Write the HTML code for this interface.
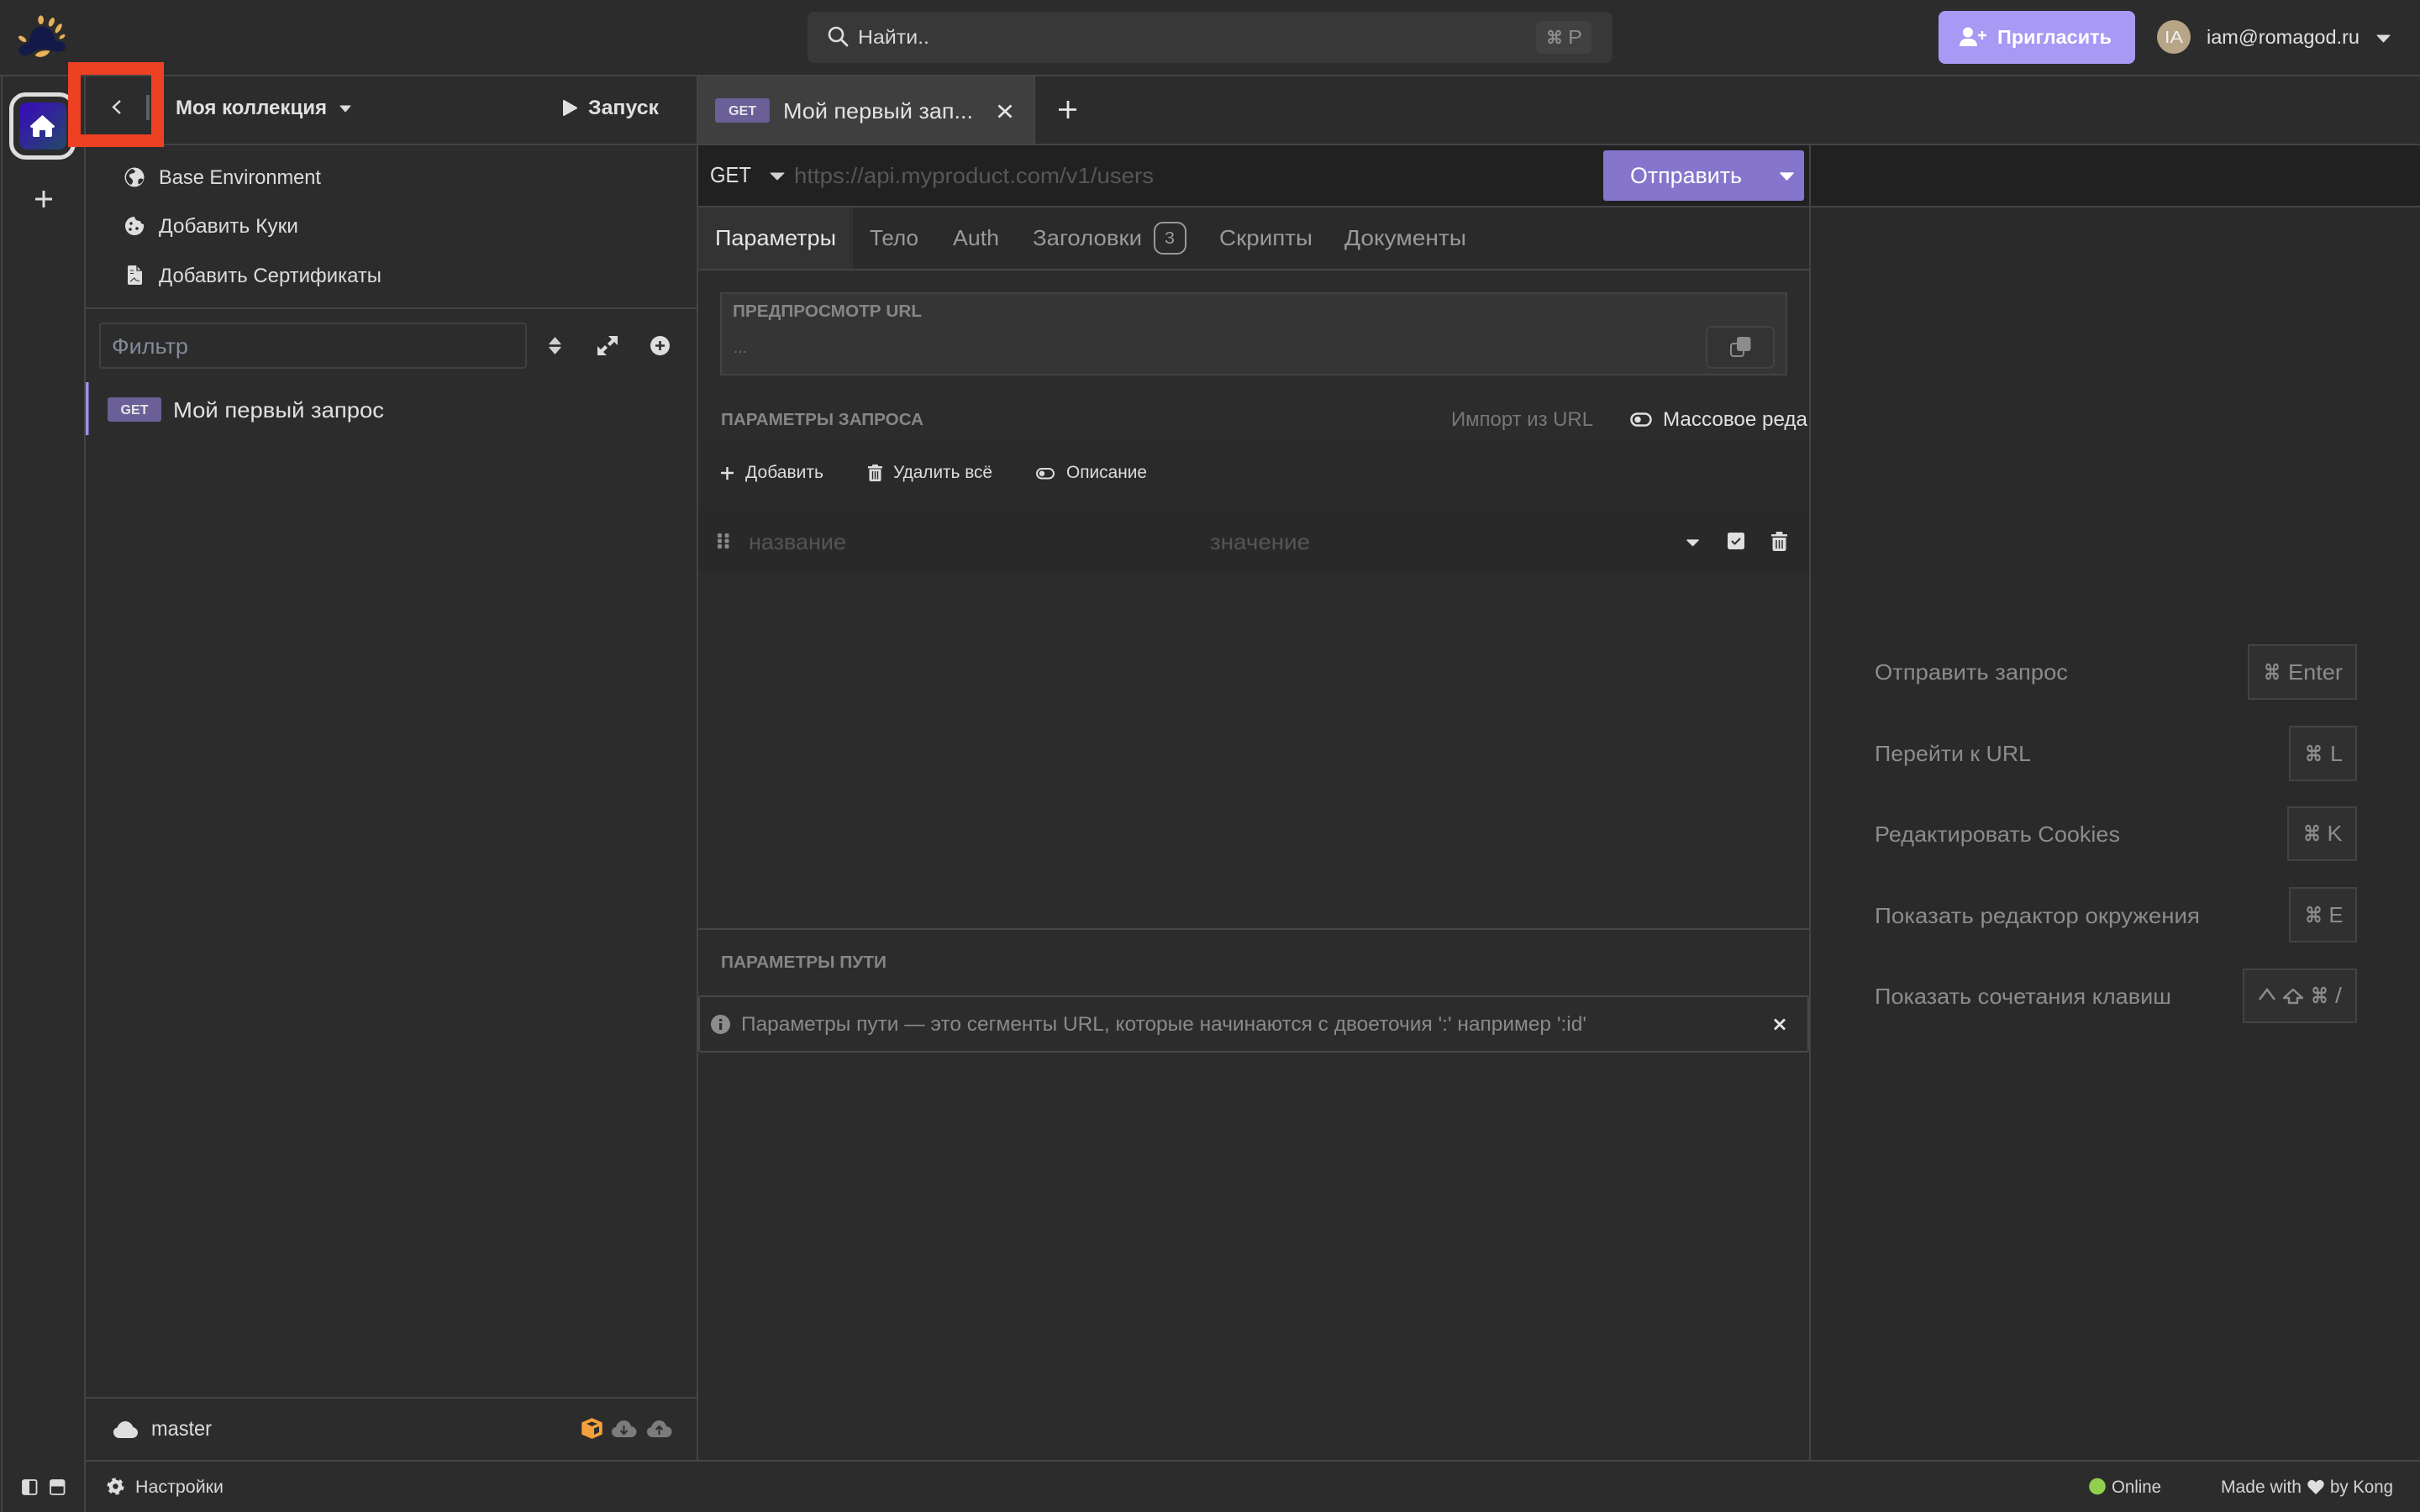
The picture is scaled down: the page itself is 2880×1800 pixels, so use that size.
<!DOCTYPE html>
<html lang="ru">
<head>
<meta charset="utf-8">
<title>Insomnia</title>
<style>
html,body{margin:0;padding:0;background:#2c2c2c;width:2880px;height:1800px;overflow:hidden}
svg{display:block}
text{font-family:"Liberation Sans","DejaVu Sans",sans-serif;white-space:pre}
.d{font-family:"DejaVu Sans","Liberation Sans",sans-serif;stroke:#8c8c8c;stroke-width:.6}
.l{fill:#444}
</style>
</head>
<body>
<svg xmlns="http://www.w3.org/2000/svg" width="2880" height="1800" viewBox="0 0 2880 1800">
<rect width="2880" height="1800" fill="#2c2c2c"/>

<!-- backgrounds -->
<rect x="831" y="173" width="2049" height="72" fill="#212121"/>
<rect x="831" y="247" width="1322" height="73" fill="#2a2a2a"/>
<rect x="2155" y="247" width="725" height="1491" fill="#2a2a2a"/>
<rect x="831" y="525" width="1322" height="82" fill="#2a2a2a"/>
<rect x="831" y="607" width="1322" height="75" fill="#292929"/>
<rect x="831" y="91" width="399" height="80" fill="#3f3f3f"/>
<rect x="831" y="247" width="184" height="73" fill="#333333"/>

<!-- structure lines -->
<rect class="l" x="0" y="89" width="2880" height="2"/>
<rect class="l" x="1" y="89" width="2" height="1711"/>
<rect class="l" x="100" y="89" width="2" height="1711"/>
<rect class="l" x="829" y="89" width="2" height="1650"/>
<rect class="l" x="102" y="171" width="727" height="2"/>
<rect class="l" x="102" y="366" width="727" height="2"/>
<rect class="l" x="102" y="1663" width="727" height="2"/>
<rect class="l" x="102" y="1738" width="2778" height="2"/>
<rect class="l" x="831" y="171" width="2049" height="2"/>
<rect class="l" x="1230" y="91" width="2" height="81"/>
<rect class="l" x="831" y="245" width="2049" height="2"/>
<rect class="l" x="831" y="320" width="1322" height="2"/>
<rect class="l" x="2153" y="172" width="2" height="1566"/>
<rect class="l" x="831" y="1105" width="1322" height="2"/>

<!-- logo -->
<g transform="scale(0.33333)">
<path d="M105 150C105 115 125 95 150 95C178 95 195 120 197 147C210 143 234 148 234 168C234 185 210 187 195 183C170 175 145 172 125 182C110 192 95 202 82 198C70 195 62 180 70 170C78 160 95 157 105 150Z" fill="#131a48"/>
<g fill="#e8b15a">
<ellipse cx="146" cy="71" rx="10" ry="16"/>
<ellipse cx="184" cy="79" rx="9" ry="17" transform="rotate(25 184 79)"/>
<ellipse cx="209" cy="101" rx="8" ry="19" transform="rotate(32 209 101)"/>
<ellipse cx="222" cy="131" rx="6" ry="12" transform="rotate(55 222 131)"/>
<ellipse cx="80" cy="139" rx="8" ry="16" transform="rotate(-55 80 139)"/>
<path d="M125 198C135 182 160 178 178 182C172 198 145 212 125 198Z"/>
</g>
</g>

<!-- top search -->
<rect x="961" y="14" width="958" height="61" rx="8" fill="#383838"/>
<circle cx="995" cy="41" r="8" fill="none" stroke="#dcdcdc" stroke-width="2.6"/>
<path d="M1001 47L1008 54" stroke="#dcdcdc" stroke-width="2.8" stroke-linecap="round"/>
<text x="1021" y="52" font-size="23" fill="#d8d8d8" textLength="85" lengthAdjust="spacingAndGlyphs">Найти..</text>
<rect x="1828" y="25" width="66" height="39" rx="6" fill="#414141"/>
<text class="d" x="1840" y="52" font-size="21" fill="#8c8c8c" textLength="20" lengthAdjust="spacingAndGlyphs">⌘</text>
<text x="1866" y="52" font-size="23" fill="#8c8c8c" textLength="17" lengthAdjust="spacingAndGlyphs">P</text>

<!-- invite -->
<rect x="2307" y="13" width="234" height="63" rx="8" fill="#a899f5"/>
<circle cx="2342" cy="38.5" r="6" fill="#fff"/>
<path d="M2332 55C2332 49 2336 46 2340 46H2344C2349 46 2353 49 2353 55Z" fill="#fff"/>
<path d="M2354 42H2364M2359 37V47" stroke="#fff" stroke-width="2.4"/>
<text x="2377" y="52" font-size="23" font-weight="700" fill="#fff" textLength="136" lengthAdjust="spacingAndGlyphs">Пригласить</text>

<!-- user -->
<circle cx="2587" cy="44" r="20" fill="#b8a486"/>
<text x="2576" y="51" font-size="20" fill="#f0f0f0" textLength="22" lengthAdjust="spacingAndGlyphs">IA</text>
<text x="2626" y="52" font-size="23" fill="#e0e0e0" textLength="182" lengthAdjust="spacingAndGlyphs">iam@romagod.ru</text>
<path d="M2829 42H2844L2836.5 50Z" fill="#dcdcdc" stroke="#dcdcdc" stroke-width="1" stroke-linejoin="round"/>

<!-- left rail -->
<rect x="13.5" y="112.5" width="74" height="75" rx="17" fill="none" stroke="#dedede" stroke-width="5"/>
<defs>
<linearGradient id="hg" x1="0" y1="0" x2="1" y2="1">
<stop offset="0" stop-color="#3a08bd"/>
<stop offset="1" stop-color="#244a69"/>
</linearGradient>
</defs>
<rect x="23" y="122" width="56" height="56" rx="9" fill="url(#hg)"/>
<path d="M50.5 137L65 150Q65 152 63 152H62V161Q62 163 60 163H54V156Q54 155 53 155H48Q47 155 47 156V163H41Q39 163 39 161V152H38Q36 152 36 150Z" fill="#fff"/>
<path d="M52 227V247M42 237H62" stroke="#dcdcdc" stroke-width="3"/>

<!-- sidebar header -->
<path d="M143 120L135 127.5L143 135" fill="none" stroke="#dcdcdc" stroke-width="2.4"/>
<rect x="174" y="113" width="4" height="30" fill="#5f5f5f"/>
<text x="209" y="136" font-size="24" font-weight="700" fill="#e0e0e0" textLength="180" lengthAdjust="spacingAndGlyphs">Моя коллекция</text>
<path d="M405 126H417L411 133Z" fill="#dcdcdc" stroke="#dcdcdc" stroke-width="1" stroke-linejoin="round"/>
<path d="M671 120V137L686 128.5Z" fill="#e0e0e0" stroke="#e0e0e0" stroke-width="2" stroke-linejoin="round"/>
<text x="700" y="136" font-size="24" font-weight="700" fill="#e0e0e0" textLength="84" lengthAdjust="spacingAndGlyphs">Запуск</text>

<!-- sidebar menu -->
<circle cx="160" cy="211" r="11.5" fill="#dedede"/>
<path d="M157 201C160 202 162 204 160 205.500C158 207 155 206 154 208.500C153 211 157 212 158 215C158.500 217 157 219 155.500 220C152 218 150 215 150 211C150 207 153 203 157 201Z" fill="#2c2c2c"/>
<path d="M165.500 213C168 212 169.500 212.500 170.500 213.500C170 216 168 218.500 165 219.500C164 218 164 215 165.500 213Z" fill="#2c2c2c"/>
<text x="189" y="219" font-size="24" fill="#dcdcdc" textLength="193" lengthAdjust="spacingAndGlyphs">Base Environment</text>

<path d="M160 258C161 262 163 263 167 263C167 266 170 267 171 267C172 274 167 280 160 280C154 280 149 275 149 269C149 263 154 258 160 258Z" fill="#dedede"/>
<circle cx="156" cy="266" r="1.800" fill="#2c2c2c"/><circle cx="155" cy="273" r="1.800" fill="#2c2c2c"/><circle cx="163" cy="272" r="1.800" fill="#2c2c2c"/>
<text x="189" y="277" font-size="24" fill="#dcdcdc" textLength="166" lengthAdjust="spacingAndGlyphs">Добавить Куки</text>

<path d="M154 316H162L169 323V337Q169 339 167 339H154Q152 339 152 337V318Q152 316 154 316Z" fill="#dedede"/>
<path d="M163 316V322H169" fill="none" stroke="#2c2c2c" stroke-width="1.300"/>
<path d="M155 322H159M155 325.500H159" stroke="#2c2c2c" stroke-width="1.100"/>
<path d="M155 335C158 334 158 331 160 331C161 333 161 334 166 334.500" fill="none" stroke="#2c2c2c" stroke-width="1.100"/>
<text x="189" y="336" font-size="24" fill="#dcdcdc" textLength="265" lengthAdjust="spacingAndGlyphs">Добавить Сертификаты</text>

<!-- filter -->
<rect x="119" y="385" width="507" height="53" rx="3" fill="none" stroke="#404040" stroke-width="2"/>
<text x="133" y="421" font-size="26" fill="#858a99" textLength="91" lengthAdjust="spacingAndGlyphs">Фильтр</text>
<path d="M660.5 402L667 409.5H654Z M660.5 421L654 413.5H667Z" fill="#d0d0d0" stroke="#d0d0d0" stroke-width="1.2" stroke-linejoin="round"/>
<g fill="#dcdcdc" stroke="none">
<path d="M724 400H735V411L731 407L726 412L723 409L728 404Z"/>
<path d="M722 423H711V412L715 416L720 411L723 414L718 419Z"/>
</g>
<circle cx="785.5" cy="411.5" r="11.5" fill="#dedede"/>
<path d="M785.5 406V417M780 411.5H791" stroke="#2c2c2c" stroke-width="2.6"/>

<!-- request row -->
<rect x="102" y="455" width="3.5" height="63" fill="#a08ff0"/>
<rect x="128" y="473" width="64" height="29" rx="3" fill="#6a5f96"/>
<text x="143.500" y="493" font-size="16" font-weight="700" fill="#e6e6e6" textLength="33" lengthAdjust="spacingAndGlyphs">GET</text>
<text x="206" y="497" font-size="26" fill="#e2e2e2" textLength="251" lengthAdjust="spacingAndGlyphs">Мой первый запрос</text>

<!-- sidebar footer -->
<path d="M142 1712C138 1712 135 1709 135 1705C135 1702 137 1700 139.500 1699.500C141 1695 145 1692 149 1692C153.500 1692 157 1695 158.500 1699C161.500 1700 164 1702 164 1705.500C164 1709 161 1712 157 1712Z" fill="#dedede"/>
<text x="180" y="1709" font-size="25" fill="#dcdcdc" textLength="72" lengthAdjust="spacingAndGlyphs">master</text>

<path d="M704.500 1689L716 1694V1707L704.500 1712L693 1707V1694Z" fill="#f4a03c" stroke="#f4a03c" stroke-width="1.500" stroke-linejoin="round"/>
<path d="M704.500 1692.500L711 1695L704.500 1698L698 1695Z" fill="#2c2c2c"/>
<path d="M707 1700.500L713 1698V1705L707 1708Z" fill="#2c2c2c"/>

<g fill="#7c7c7c"><path d="M735 1711C731 1711 728 1708 728 1704.500C728 1701.500 730 1699.500 733 1699C734 1694.500 738 1691 742.500 1691C747 1691 750 1694 751 1698C755 1698.500 757.500 1701 757.500 1704.500C757.500 1708 754.500 1711 751 1711Z"/>
<path d="M777 1711C773 1711 770 1708 770 1704.500C770 1701.500 772 1699.500 775 1699C776 1694.500 780 1691 784.500 1691C789 1691 792 1694 793 1698C797 1698.500 799.500 1701 799.500 1704.500C799.500 1708 796.500 1711 793 1711Z"/></g>
<path d="M742.500 1697V1707M738.500 1703L742.500 1707L746.500 1703" fill="none" stroke="#2c2c2c" stroke-width="2"/>
<path d="M784.500 1708V1698M780.500 1702L784.500 1698L788.500 1702" fill="none" stroke="#2c2c2c" stroke-width="2"/>

<!-- tab bar -->
<rect x="851" y="117" width="65" height="29" rx="3" fill="#6a5f96"/>
<text x="867" y="137" font-size="16" font-weight="700" fill="#e6e6e6" textLength="33" lengthAdjust="spacingAndGlyphs">GET</text>
<text x="932" y="141" font-size="26" fill="#e2e2e2" textLength="226" lengthAdjust="spacingAndGlyphs">Мой первый зап...</text>
<path d="M1188.500 125.500L1203.500 139.500M1203.500 125.500L1188.500 139.500" stroke="#e6e6e6" stroke-width="2.700"/>
<path d="M1271 120V141M1260 130.500H1281" stroke="#e6e6e6" stroke-width="2.800"/>

<!-- url bar -->
<text x="845" y="217" font-size="26" fill="#e0e0e0" textLength="49" lengthAdjust="spacingAndGlyphs">GET</text>
<path d="M917 206H933L925 214Z" fill="#d0d0d0" stroke="#d0d0d0" stroke-width="1" stroke-linejoin="round"/>
<text x="945" y="218" font-size="26" fill="#575757" textLength="428" lengthAdjust="spacingAndGlyphs">https://api.myproduct.com/v1/users</text>
<rect x="1908" y="179" width="239" height="60" rx="3" fill="#8675cd"/>
<text x="1940" y="218" font-size="27" fill="#fff" textLength="133" lengthAdjust="spacingAndGlyphs">Отправить</text>
<path d="M2119 206H2134L2126.500 214Z" fill="#fff" stroke="#fff" stroke-width="1.500" stroke-linejoin="round"/>

<!-- request tabs -->
<text x="851" y="292" font-size="26" fill="#e6e6e6" textLength="144" lengthAdjust="spacingAndGlyphs">Параметры</text>
<text x="1035" y="292" font-size="26" fill="#9a9a9a" textLength="58" lengthAdjust="spacingAndGlyphs">Тело</text>
<text x="1134" y="292" font-size="26" fill="#9a9a9a" textLength="55" lengthAdjust="spacingAndGlyphs">Auth</text>
<text x="1229" y="292" font-size="26" fill="#9a9a9a" textLength="130" lengthAdjust="spacingAndGlyphs">Заголовки</text>
<rect x="1374" y="265" width="37" height="37" rx="10" fill="none" stroke="#999" stroke-width="2"/>
<text x="1386" y="290" font-size="20" fill="#999" textLength="12" lengthAdjust="spacingAndGlyphs">3</text>
<text x="1451" y="292" font-size="26" fill="#9a9a9a" textLength="111" lengthAdjust="spacingAndGlyphs">Скрипты</text>
<text x="1600" y="292" font-size="26" fill="#9a9a9a" textLength="145" lengthAdjust="spacingAndGlyphs">Документы</text>

<!-- url preview -->
<rect x="858" y="349" width="1268" height="97" fill="#353535" stroke="#434343" stroke-width="2"/>
<text x="872" y="377" font-size="20" font-weight="700" fill="#868686" textLength="225" lengthAdjust="spacingAndGlyphs">ПРЕДПРОСМОТР URL</text>
<text x="873" y="420" font-size="20" fill="#6a6a6a" textLength="16" lengthAdjust="spacingAndGlyphs">...</text>
<rect x="2031" y="389" width="80" height="49" rx="6" fill="#333" stroke="#424242" stroke-width="2"/>
<rect x="2060" y="409" width="15" height="15" rx="3" fill="none" stroke="#8c8c8c" stroke-width="2"/>
<rect x="2067" y="401" width="16.500" height="17" rx="3" fill="#8c8c8c"/>

<!-- query params -->
<text x="858" y="506" font-size="20" font-weight="700" fill="#868686" textLength="241" lengthAdjust="spacingAndGlyphs">ПАРАМЕТРЫ ЗАПРОСА</text>
<text x="1727" y="507" font-size="24" fill="#777" textLength="169" lengthAdjust="spacingAndGlyphs">Импорт из URL</text>
<rect x="1941.500" y="492.500" width="23" height="14" rx="7" fill="none" stroke="#e0e0e0" stroke-width="2.500"/>
<circle cx="1949" cy="499.500" r="3.800" fill="#e0e0e0"/>
<svg x="1970" y="480" width="183" height="40" viewBox="1970 480 183 40">
<text x="1979" y="507" font-size="24" fill="#e0e0e0" textLength="172" lengthAdjust="spacingAndGlyphs">Массовое реда</text>
</svg>

<path d="M858 563H873M865.500 556V571" stroke="#e0e0e0" stroke-width="2.400"/>
<text x="887" y="569" font-size="21" fill="#dcdcdc" textLength="93" lengthAdjust="spacingAndGlyphs">Добавить</text>
<g fill="#dcdcdc">
<rect x="1033" y="555" width="17" height="2.500"/><rect x="1038" y="553" width="7" height="3" rx="1"/>
<path d="M1034.500 558.500H1048.500V571Q1048.500 573 1046.500 573H1036.500Q1034.500 573 1034.500 571Z"/>
</g>
<path d="M1038.500 561V570.500M1041.500 561V570.500M1044.500 561V570.500" stroke="#2a2a2a" stroke-width="1.400"/>
<text x="1063" y="569" font-size="21" fill="#dcdcdc" textLength="118" lengthAdjust="spacingAndGlyphs">Удалить всё</text>
<rect x="1234" y="558" width="20" height="11.500" rx="5.700" fill="none" stroke="#dcdcdc" stroke-width="2"/>
<circle cx="1240" cy="563.700" r="3.200" fill="#dcdcdc"/>
<text x="1269" y="569" font-size="21" fill="#dcdcdc" textLength="96" lengthAdjust="spacingAndGlyphs">Описание</text>

<!-- param row -->
<g fill="#8a8a8a">
<rect x="854" y="635" width="5" height="5" rx="1.500"/><rect x="862.500" y="635" width="5" height="5" rx="1.500"/>
<rect x="854" y="641.500" width="5" height="5" rx="1.500"/><rect x="862.500" y="641.500" width="5" height="5" rx="1.500"/>
<rect x="854" y="648" width="5" height="5" rx="1.500"/><rect x="862.500" y="648" width="5" height="5" rx="1.500"/>
</g>
<text x="891" y="654" font-size="26" fill="#555" textLength="116" lengthAdjust="spacingAndGlyphs">название</text>
<text x="1440" y="654" font-size="26" fill="#555" textLength="119" lengthAdjust="spacingAndGlyphs">значение</text>
<path d="M2008 643H2021L2014.500 649.500Z" fill="#e0e0e0" stroke="#e0e0e0" stroke-width="1.500" stroke-linejoin="round"/>
<rect x="2056" y="634" width="20" height="20" rx="2.500" fill="#e0e0e0"/>
<path d="M2061 644L2064.500 647.500L2071 641" fill="none" stroke="#2a2a2a" stroke-width="2"/>
<g fill="#dcdcdc">
<rect x="2108" y="636" width="19" height="2.500"/><rect x="2113.500" y="633" width="8" height="3" rx="1"/>
<path d="M2109.500 640H2125.500V653.500Q2125.500 656 2123 656H2112Q2109.500 656 2109.500 653.500Z"/>
</g>
<path d="M2114 643V653M2117.500 643V653M2121 643V653" stroke="#292929" stroke-width="1.400"/>

<!-- path params -->
<text x="858" y="1152" font-size="20" font-weight="700" fill="#868686" textLength="197" lengthAdjust="spacingAndGlyphs">ПАРАМЕТРЫ ПУТИ</text>
<rect x="832" y="1186" width="1320" height="66" rx="2" fill="none" stroke="#484848" stroke-width="2"/>
<circle cx="857.500" cy="1219.500" r="11.500" fill="#8c8c8c"/>
<rect x="856" y="1218" width="3.200" height="8" fill="#2c2c2c"/><rect x="856" y="1213" width="3.200" height="3" fill="#2c2c2c"/>
<text x="882" y="1227" font-size="24" fill="#8a8a8a" textLength="1006" lengthAdjust="spacingAndGlyphs">Параметры пути — это сегменты URL, которые начинаются с двоеточия ':' например ':id'</text>
<path d="M2112 1213.500L2124 1225.500M2124 1213.500L2112 1225.500" stroke="#e6e6e6" stroke-width="2.800"/>

<!-- shortcuts -->
<g fill="#8c8c8c" font-size="26">
<text x="2231" y="809" textLength="230" lengthAdjust="spacingAndGlyphs">Отправить запрос</text>
<text x="2231" y="906" textLength="186" lengthAdjust="spacingAndGlyphs">Перейти к URL</text>
<text x="2231" y="1002" textLength="292" lengthAdjust="spacingAndGlyphs">Редактировать Cookies</text>
<text x="2231" y="1099" textLength="387" lengthAdjust="spacingAndGlyphs">Показать редактор окружения</text>
<text x="2231" y="1195" textLength="353" lengthAdjust="spacingAndGlyphs">Показать сочетания клавиш</text>
</g>
<g fill="#303030" stroke="#434343" stroke-width="2">
<rect x="2676" y="768" width="128" height="64"/>
<rect x="2725" y="865" width="79" height="64"/>
<rect x="2723" y="961" width="81" height="63"/>
<rect x="2725" y="1057" width="79" height="64"/>
<rect x="2670" y="1154" width="134" height="63"/>
</g>
<g fill="#8c8c8c" font-size="25">
<text class="d" x="2694" y="809" textLength="20" lengthAdjust="spacingAndGlyphs">⌘</text>
<text x="2723" y="809" font-size="26" textLength="65" lengthAdjust="spacingAndGlyphs">Enter</text>
<text class="d" x="2743" y="906" textLength="21" lengthAdjust="spacingAndGlyphs">⌘</text>
<text x="2773" y="906" font-size="26" textLength="15" lengthAdjust="spacingAndGlyphs">L</text>
<text class="d" x="2741" y="1001" textLength="21" lengthAdjust="spacingAndGlyphs">⌘</text>
<text x="2769.500" y="1001" font-size="26" textLength="18" lengthAdjust="spacingAndGlyphs">K</text>
<text class="d" x="2743" y="1098" textLength="21" lengthAdjust="spacingAndGlyphs">⌘</text>
<text x="2771.500" y="1098" font-size="26" textLength="17" lengthAdjust="spacingAndGlyphs">E</text>
<text class="d" x="2750" y="1194" textLength="21" lengthAdjust="spacingAndGlyphs">⌘</text>
<text x="2779" y="1194" font-size="26" textLength="8" lengthAdjust="spacingAndGlyphs">/</text>
</g>
<path d="M2689 1190L2698 1178L2707 1190" fill="none" stroke="#8c8c8c" stroke-width="2.500"/>
<path d="M2729 1178L2740 1188H2734V1194H2724V1188H2718Z" fill="none" stroke="#8c8c8c" stroke-width="2.400" stroke-linejoin="round"/>

<!-- status bar -->
<rect x="27" y="1762" width="16.500" height="17" rx="2" fill="none" stroke="#dcdcdc" stroke-width="1.800"/>
<rect x="27" y="1762" width="8" height="17" fill="#dcdcdc"/>
<rect x="60" y="1762" width="16.500" height="17" rx="2" fill="none" stroke="#dcdcdc" stroke-width="1.800"/>
<rect x="60" y="1762" width="16.500" height="7.500" fill="#dcdcdc"/>
<circle cx="137.500" cy="1769.500" r="5.500" fill="none" stroke="#dedede" stroke-width="4.500"/>
<circle cx="137.500" cy="1769.500" r="8.600" fill="none" stroke="#dedede" stroke-width="2.800" stroke-dasharray="4.500 4.500"/>
<text x="161" y="1777" font-size="21" fill="#d8d8d8" textLength="105" lengthAdjust="spacingAndGlyphs">Настройки</text>
<circle cx="2496" cy="1769.500" r="9.800" fill="#90d04e"/>
<text x="2513" y="1777" font-size="21" fill="#d4d4d4" textLength="59" lengthAdjust="spacingAndGlyphs">Online</text>
<text x="2643" y="1777" font-size="21" fill="#d4d4d4" textLength="96" lengthAdjust="spacingAndGlyphs">Made with</text>
<path d="M2756 1779L2748 1771C2744 1766 2748 1762 2751 1762C2753 1762 2755 1763 2756 1765C2757 1763 2759 1762 2761 1762C2764 1762 2768 1766 2764 1771Z" fill="#dedede"/>
<text x="2773" y="1777" font-size="21" fill="#d4d4d4" textLength="75" lengthAdjust="spacingAndGlyphs">by Kong</text>

<!-- red annotation -->
<rect x="88.500" y="81.500" width="99" height="86" fill="none" stroke="#ee4023" stroke-width="15"/>
</svg>
</body>
</html>
